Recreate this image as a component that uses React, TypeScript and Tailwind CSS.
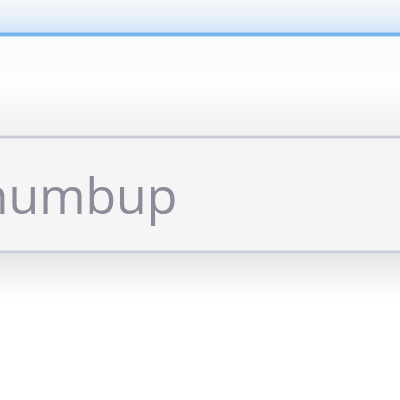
export default function App() {
  return (
    <div className="w-[400px] h-[400px] overflow-hidden bg-white flex flex-col" style={{ fontFamily: '"Open Sans", "Noto Sans", sans-serif' }}>
      <div className="h-[32px] bg-gradient-to-b from-[#f5f6f9] via-[#eaf1f9] to-[#d0e4f8]" />
      <div className="h-[1px] bg-[#a6cdf3]" />
      <div className="h-[3px] bg-[#74b2ec]" />
      <div className="h-[1px] bg-[#c2ddf5]" />
      <div className="h-[98px] bg-gradient-to-b from-[#fafafa] via-[#fefefe] to-[#f0f0f0]" />
      <div className="h-[1px] bg-[#e2e4ea]" />
      <div className="h-[2px] bg-[#c6cad8]" />
      <div className="h-[1px] bg-[#e4e6ec]" />
      <div className="h-[111px] bg-[#f5f5f5] pt-[31px] overflow-hidden">
        <div className="ml-[-40px] text-[50px] leading-[50px] text-[#8b8b99] whitespace-nowrap blur-[0.4px]">thumbup</div>
      </div>
      <div className="h-[1px] bg-[#dfe1e8]" />
      <div className="h-[2px] bg-[#c8ccda]" />
      <div className="h-[1px] bg-[#dfe1e8]" />
      <div className="h-[45px] bg-gradient-to-b from-[#e6e6e6] to-[#ffffff]" />
      <div className="flex-1 bg-white" />
    </div>
  );
}
